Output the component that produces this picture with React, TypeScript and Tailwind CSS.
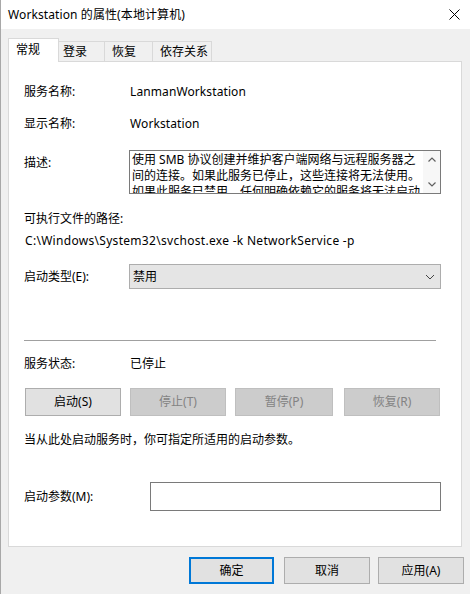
import React from "react";

const font = { fontFamily: '"Microsoft YaHei UI", "Noto Sans", "Noto Sans CJK SC", sans-serif' };

function Btn({ w, label, disabled }: { w: string; label: string; disabled?: boolean }) {
  return (
    <div
      className={
        "h-[28px] flex items-center justify-center border text-[12px] " +
        w +
        (disabled ? " bg-[#cccccc] border-[#bfbfbf] text-[#838383]" : " bg-[#e1e1e1] border-[#adadad] text-black")
      }
    >
      {label}
    </div>
  );
}

export default function App() {
  return (
    <div className="w-[470px] h-[594px] flex flex-col bg-[#f0f0f0] text-[12px] text-black overflow-hidden relative" style={font}>
      <div className="absolute left-0 top-0 bottom-0 w-[1px] bg-[#a8a8a8]" />
      {/* title bar */}
      <div className="h-[29px] bg-white flex items-center justify-between pl-[8px] pr-[10px] shrink-0">
        <span className="text-[12px] leading-none tracking-[0.1px]">Workstation 的属性(本地计算机)</span>
        <svg width="11" height="11" viewBox="0 0 11 11" className="mr-[0px]">
          <path d="M0.5 0.5 L10.5 10.5 M10.5 0.5 L0.5 10.5" stroke="#000" strokeWidth="1" />
        </svg>
      </div>

      {/* body */}
      <div className="flex-1 flex flex-col pl-[8px] pt-[9px]">
        {/* tabs */}
        <div className="flex items-end h-[24px] relative z-10 -mb-[1px]">
          <div className="w-[51px] h-[24px] bg-white border border-b-0 border-[#d9d9d9] flex items-center pl-[7px] pb-[2px]">常规</div>
          <div className="w-[46px] h-[21px] border-t border-r border-[#d9d9d9] border-b flex items-center pl-[4px] pt-[1px]">登录</div>
          <div className="w-[48px] h-[21px] border-t border-r border-[#d9d9d9] border-b flex items-center pl-[7px] pt-[1px]">恢复</div>
          <div className="w-[59px] h-[21px] border-t border-r border-[#d9d9d9] border-b flex items-center pl-[7px] pt-[1px]">依存关系</div>
        </div>

        {/* panel */}
        <div className="w-[454px] h-[486px] bg-white border border-[#d9d9d9] flex flex-col pl-[15px] pr-[20px]">
          <div className="mt-[20px] h-[20px] flex items-center">
            <span className="w-[106px]">服务名称:</span>
            <span className="tracking-[0.1px]">LanmanWorkstation</span>
          </div>
          <div className="mt-[12px] h-[20px] flex items-center">
            <span className="w-[106px]">显示名称:</span>
            <span className="tracking-[0.1px]">Workstation</span>
          </div>
          <div className="mt-[16px] flex items-start">
            <span className="w-[105px] h-[20px] mt-[3px] flex items-center">描述:</span>
            <div className="w-[312px] h-[44px] border border-[#7a7a7a] flex bg-white">
              <div className="flex-1 overflow-hidden pl-[2px] pt-[1px] leading-[16px] whitespace-nowrap">
                <div>使用 SMB 协议创建并维护客户端网络与远程服务器之</div>
                <div>间的连接。如果此服务已停止，这些连接将无法使用。</div>
                <div>如果此服务已禁用，任何明确依赖它的服务将无法启动。</div>
              </div>
              <div className="w-[17px] flex flex-col items-center justify-between py-[6px] bg-[#f7f7f7]">
                <svg width="8" height="5" viewBox="0 0 8 5">
                  <path d="M0.5 4.5 L4 1 L7.5 4.5" stroke="#606060" strokeWidth="1.2" fill="none" />
                </svg>
                <svg width="8" height="5" viewBox="0 0 8 5">
                  <path d="M0.5 0.5 L4 4 L7.5 0.5" stroke="#606060" strokeWidth="1.2" fill="none" />
                </svg>
              </div>
            </div>
          </div>
          <div className="mt-[15px] h-[20px] flex items-center">可执行文件的路径:</div>
          <div className="mt-[2px] h-[20px] flex items-center pl-[1px] tracking-[0.3px]">C:\Windows\System32\svchost.exe -k NetworkService -p</div>
          <div className="mt-[13px] flex items-center">
            <span className="w-[105px]">启动类型(E):</span>
            <div className="w-[312px] h-[25px] border border-[#adadad] bg-[#e5e5e5] flex items-center justify-between pl-[3px] pr-[5px]">
              <span>禁用</span>
              <svg width="10" height="6" viewBox="0 0 10 6">
                <path d="M1 1 L5 5 L9 1" stroke="#444" strokeWidth="1" fill="none" />
              </svg>
            </div>
          </div>
          <div className="mt-[51px] h-[1px] w-[412px] bg-[#a0a0a0]" />
          <div className="mt-[13px] h-[20px] flex items-center">
            <span className="w-[106px]">服务状态:</span>
            <span>已停止</span>
          </div>
          <div className="mt-[14px] flex items-center pl-[1px]">
            <Btn w="w-[96px]" label="启动(S)" />
            <div className="w-[9px]" />
            <Btn w="w-[96px]" label="停止(T)" disabled />
            <div className="w-[9px]" />
            <Btn w="w-[98px]" label="暂停(P)" disabled />
            <div className="w-[11px]" />
            <Btn w="w-[96px]" label="恢复(R)" disabled />
          </div>
          <div className="mt-[14px] h-[20px] flex items-center">当从此处启动服务时，你可指定所适用的启动参数。</div>
          <div className="mt-[32px] flex items-center">
            <span className="w-[126px]">启动参数(M):</span>
            <div className="w-[291px] h-[29px] border border-[#7a7a7a] bg-white" />
          </div>
        </div>

        {/* bottom buttons */}
        <div className="mt-[10px] flex pl-[181px]">
          <div className="w-[85px] h-[27px] border-2 border-[#0078d7] bg-[#e1e1e1] flex items-center justify-center">确定</div>
          <div className="w-[10px]" />
          <div className="w-[86px] h-[27px] border border-[#adadad] bg-[#e1e1e1] flex items-center justify-center">取消</div>
          <div className="w-[8px]" />
          <div className="w-[86px] h-[27px] border border-[#adadad] bg-[#e1e1e1] flex items-center justify-center">应用(A)</div>
        </div>
      </div>
    </div>
  );
}
